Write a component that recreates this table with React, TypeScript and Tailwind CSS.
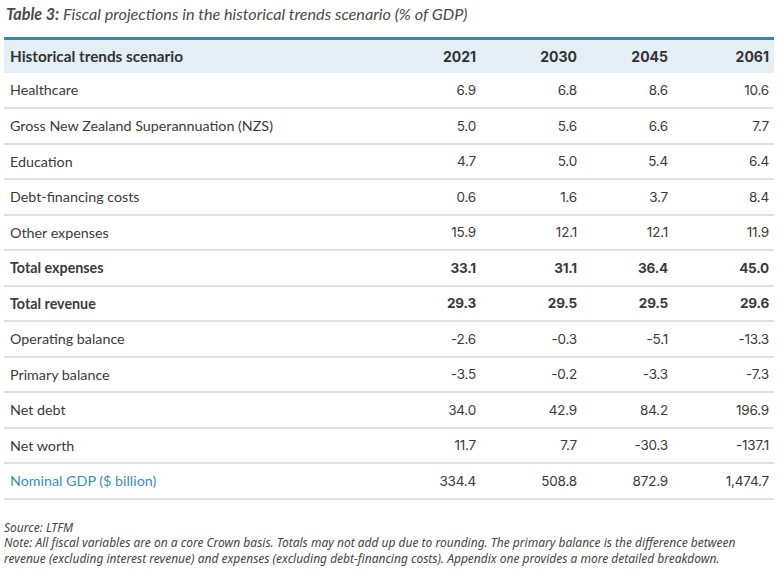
import React from "react";

const rows: { label: string; values: string[]; bold?: boolean; blue?: boolean }[] = [
  { label: "Healthcare", values: ["6.9", "6.8", "8.6", "10.6"] },
  { label: "Gross New Zealand Superannuation (NZS)", values: ["5.0", "5.6", "6.6", "7.7"] },
  { label: "Education", values: ["4.7", "5.0", "5.4", "6.4"] },
  { label: "Debt-financing costs", values: ["0.6", "1.6", "3.7", "8.4"] },
  { label: "Other expenses", values: ["15.9", "12.1", "12.1", "11.9"] },
  { label: "Total expenses", values: ["33.1", "31.1", "36.4", "45.0"], bold: true },
  { label: "Total revenue", values: ["29.3", "29.5", "29.5", "29.6"], bold: true },
  { label: "Operating balance", values: ["-2.6", "-0.3", "-5.1", "-13.3"] },
  { label: "Primary balance", values: ["-3.5", "-0.2", "-3.3", "-7.3"] },
  { label: "Net debt", values: ["34.0", "42.9", "84.2", "196.9"] },
  { label: "Net worth", values: ["11.7", "7.7", "-30.3", "-137.1"] },
  { label: "Nominal GDP ($ billion)", values: ["334.4", "508.8", "872.9", "1,474.7"], blue: true },
];

const years = ["2021", "2030", "2045", "2061"];
const colWidths = ["w-[102px]", "w-[101px]", "w-[92px]", "w-[96px]"];
const colPad = ["pr-[9px]", "pr-[9px]", "pr-[10px]", "pr-[5px]"];

export default function App() {
  return (
    <div className="w-[778px] h-[581px] bg-white text-[#3a3a3a] overflow-hidden" style={{ fontFamily: "Lato, 'Open Sans', sans-serif" }}>
      <p className="pl-[6px] pt-[3px] text-[16.2px] italic text-[#4a4a4a] leading-[22px]">
        <span className="font-bold">Table 3:</span> Fiscal projections in the historical trends scenario (% of GDP)
      </p>

      <table className="mt-[12px] ml-[4px] w-[770px] border-collapse">
        <thead>
          <tr className="bg-[#e3eef5] border-t-[3px] border-[#3b84ae]">
            <th className="h-[34px] pl-[6px] text-left text-[15.3px] font-bold text-[#333]">Historical trends scenario</th>
            {years.map((y, i) => (
              <th
                key={y}
                className={`${colWidths[i]} ${colPad[i]} text-right text-[14px] font-bold text-[#333]`}
                style={{ fontFamily: "Inter, Lato, sans-serif" }}
              >
                {y}
              </th>
            ))}
          </tr>
        </thead>
        <tbody>
          {rows.map((r) => (
            <tr key={r.label} className="border-b-2 border-[#e0e0e0]">
              <td
                className={`h-[35.5px] pl-[6px] text-[14.3px] ${r.bold ? "font-bold" : ""} ${r.blue ? "text-[#3a8bbf]" : ""}`}
              >
                {r.label}
              </td>
              {r.values.map((v, i) => (
                <td
                  key={i}
                  className={`${colPad[i]} text-right text-[13.5px] tracking-[-0.2px] ${r.bold ? "font-bold" : ""}`}
                  style={{ fontFamily: "Inter, Lato, sans-serif" }}
                >
                  {v}
                </td>
              ))}
            </tr>
          ))}
        </tbody>
      </table>

      <div
        className="mt-[20px] pl-[4px] text-[12px] italic leading-[15.5px] text-[#444]"
        style={{ fontFamily: "'Noto Sans', 'Open Sans', sans-serif" }}
      >
        <p>Source: LTFM</p>
        <p>
          Note: All fiscal variables are on a core Crown basis. Totals may not add up due to rounding. The primary balance is the difference between
          <br />
          revenue (excluding interest revenue) and expenses (excluding debt-financing costs). Appendix one provides a more detailed breakdown.
        </p>
      </div>
    </div>
  );
}
